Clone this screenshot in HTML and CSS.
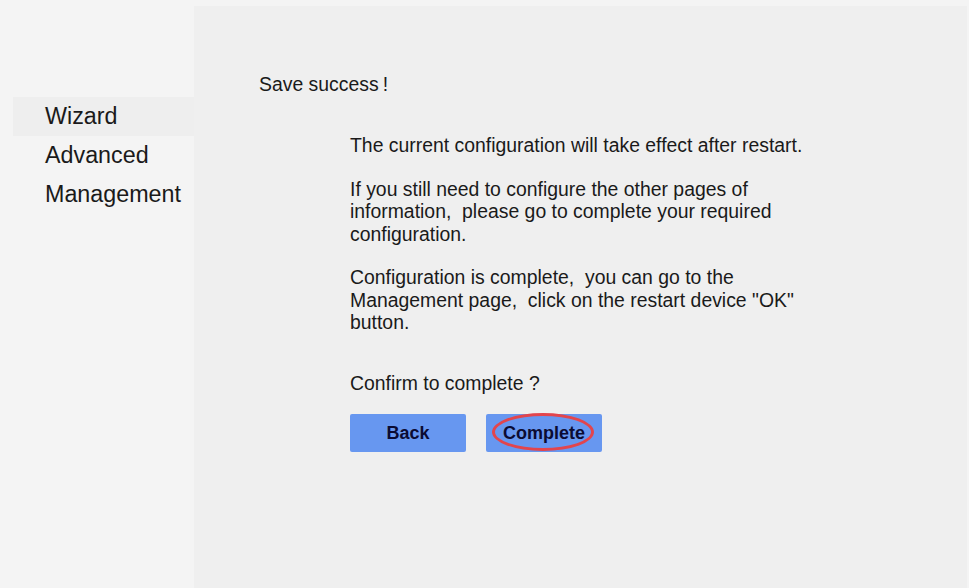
FILE: index.html
```html
<!DOCTYPE html>
<html lang="en">
<head>
<meta charset="utf-8">
<title>Wizard</title>
<link rel="stylesheet" href="styles.css">
</head>
<body>
<div class="page">
  <nav class="sidebar">
    <div class="nav-item active">Wizard</div>
    <div class="nav-item">Advanced</div>
    <div class="nav-item">Management</div>
  </nav>
  <main class="main">
    <div class="title">Save success<span class="bang">!</span></div>
    <div class="body">
      <p>The current configuration will take effect after restart.</p>
      <p>If you still need to configure the other pages of information,&nbsp; please go to complete your required configuration.</p>
      <p>Configuration is complete,&nbsp; you can go to the Management page,&nbsp; click on the restart device "OK" button.</p>
      <p class="confirm">Confirm to complete ?</p>
      <div class="buttons">
        <button class="btn">Back</button>
        <button class="btn btn-mark">Complete<span class="ring"></span></button>
      </div>
    </div>
  </main>
</div>
</body>
</html>
```
FILE: styles.css
```css
html, body {
  margin: 0;
  padding: 0;
  background: #f4f4f4;
  font-family: "Liberation Sans", Arial, sans-serif;
  color: #1a1a1a;
}
.page {
  display: flex;
  width: 969px;
  height: 588px;
}
.sidebar {
  width: 181px;
  padding-top: 97px;
  padding-left: 13px;
  flex: none;
}
.nav-item {
  height: 39px;
  line-height: 38px;
  padding-left: 32px;
  font-size: 23.3px;
  color: #1a1a1a;
}
.nav-item.active {
  background: #eeeeee;
}
.main {
  flex: 1;
  margin-top: 6px;
  margin-right: 2px;
  background: #efefef;
  padding-left: 65px;
  padding-top: 66px;
}
.title {
  font-size: 19.4px;
  line-height: 24px;
}
.bang {
  margin-left: 4px;
}
.body {
  margin-left: 91px;
  margin-top: 38px;
  width: 480px;
  font-size: 19.4px;
  line-height: 22.5px;
}
.body p {
  margin: 0 0 21px 0;
}
.body p.confirm {
  margin-top: 38px;
  margin-bottom: 20px;
}
.buttons {
  display: flex;
  gap: 20px;
}
.btn {
  position: relative;
  width: 116px;
  height: 38px;
  border: none;
  border-radius: 2px;
  background: #6797f0;
  color: #0b0b33;
  font-family: "Liberation Sans", Arial, sans-serif;
  font-weight: bold;
  font-size: 18px;
  padding: 0;
}
.ring {
  position: absolute;
  left: 6px;
  top: -1px;
  width: 96px;
  height: 32px;
  border: 3px solid #e2454d;
  border-radius: 50%;
}
```
